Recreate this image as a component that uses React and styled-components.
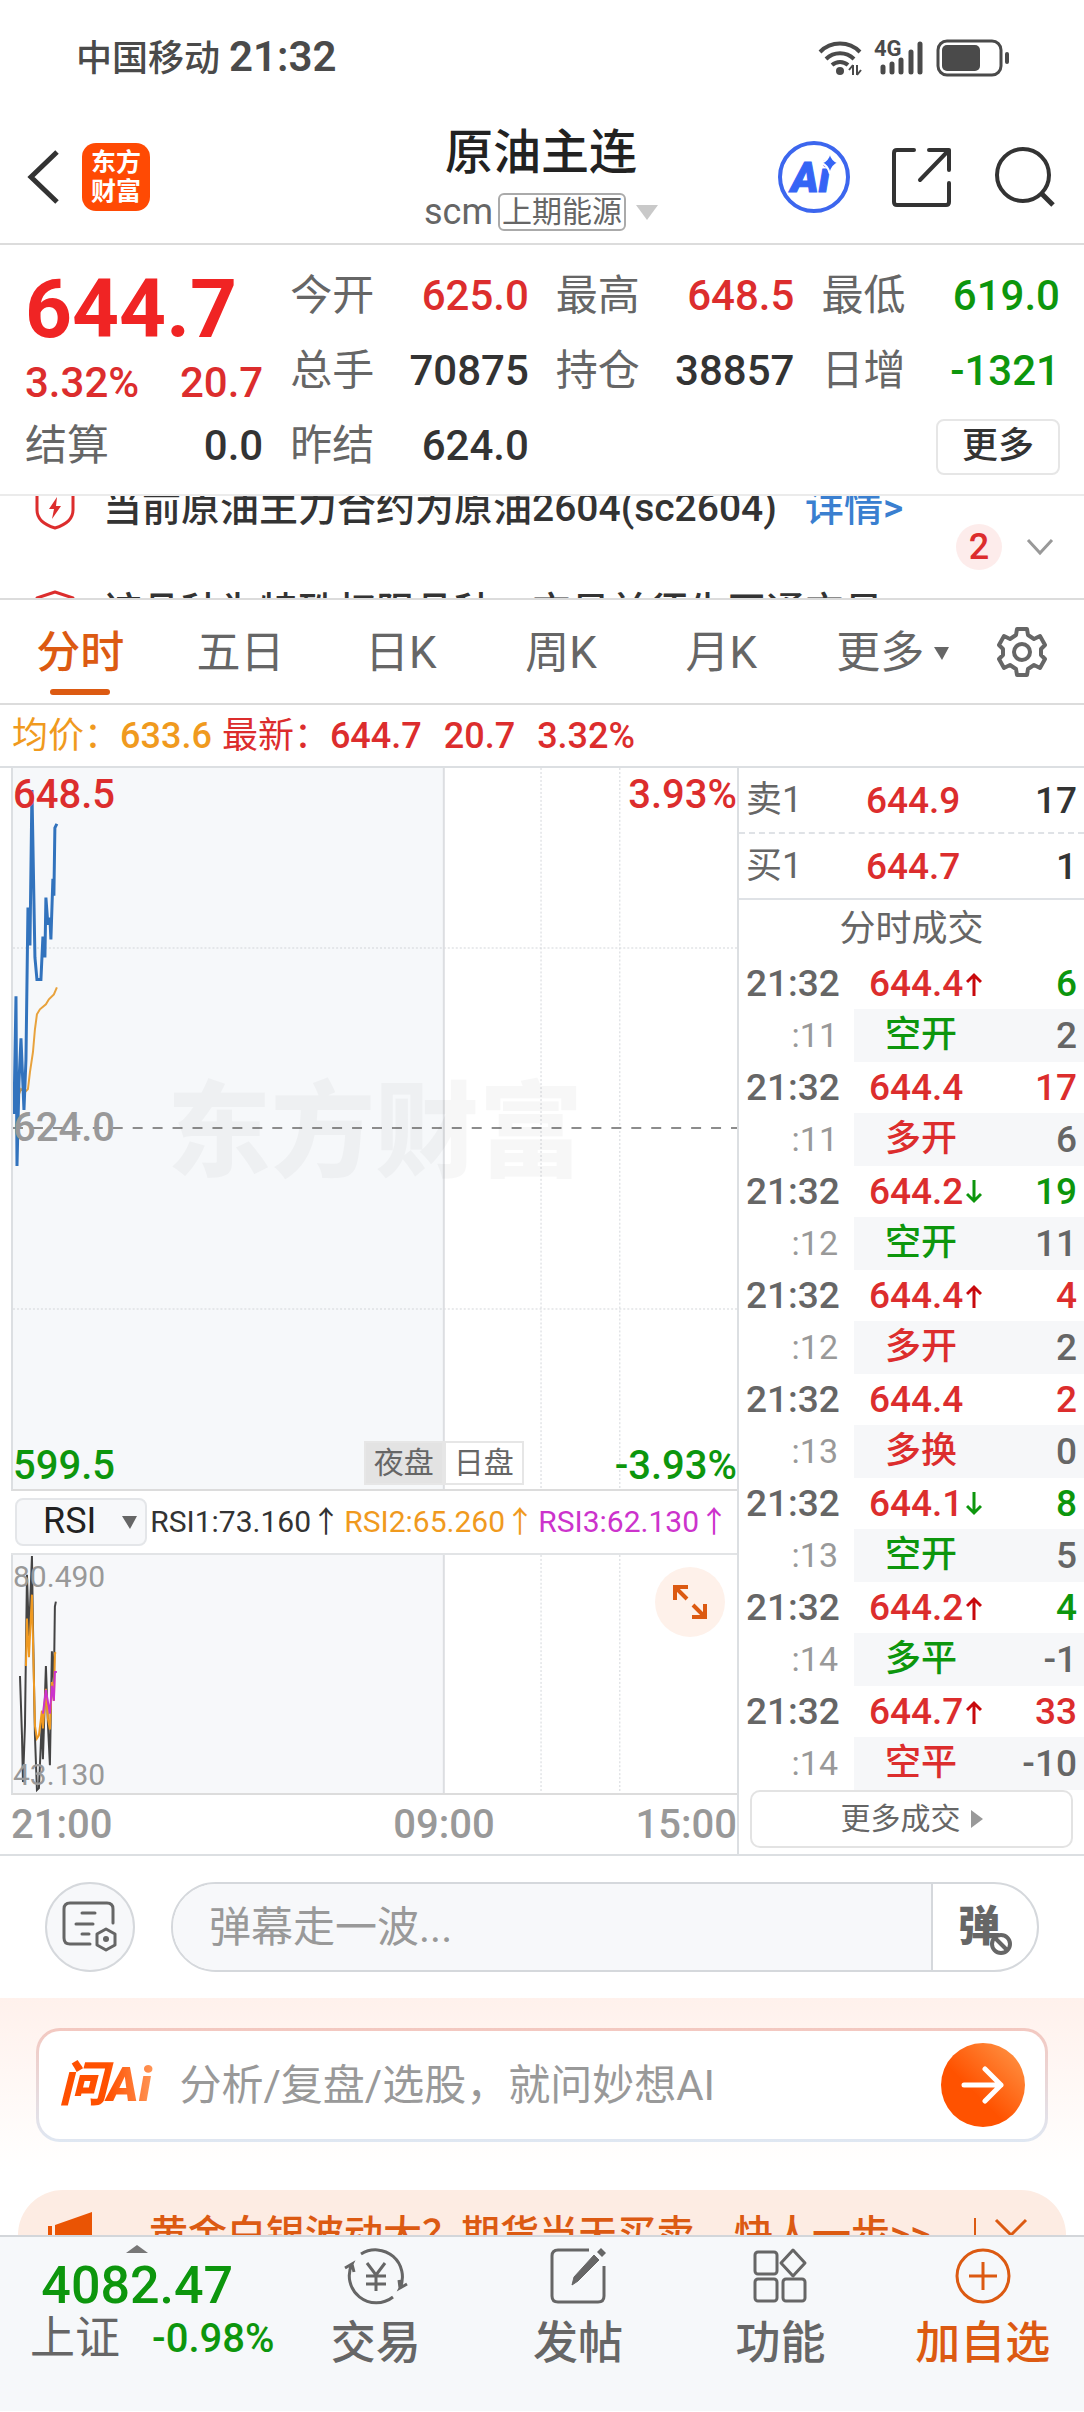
import React, { useState } from 'react';
import styled, { createGlobalStyle } from 'styled-components';

const RED = '#dc2d2d';
const GREEN = '#0d960d';
const ORANGE = '#dc5a12';
const YELLOW = '#f09a1e';

const quotes = [
  { label: '今开', value: '625.0', color: RED },
  { label: '最高', value: '648.5', color: RED },
  { label: '最低', value: '619.0', color: GREEN },
  { label: '总手', value: '70875' },
  { label: '持仓', value: '38857' },
  { label: '日增', value: '-1321', color: GREEN },
];

const tabs = ['分时', '五日', '日K', '周K', '月K'];

const trades = [
  { price: '644.4', dir: 'up', vol: 6, color: GREEN, sec: ':11', type: '空开', typeColor: GREEN, diff: '2' },
  { price: '644.4', dir: '', vol: 17, color: RED, sec: ':11', type: '多开', typeColor: RED, diff: '6' },
  { price: '644.2', dir: 'down', vol: 19, color: GREEN, sec: ':12', type: '空开', typeColor: GREEN, diff: '11' },
  { price: '644.4', dir: 'up', vol: 4, color: RED, sec: ':12', type: '多开', typeColor: RED, diff: '2' },
  { price: '644.4', dir: '', vol: 2, color: RED, sec: ':13', type: '多换', typeColor: RED, diff: '0' },
  { price: '644.1', dir: 'down', vol: 8, color: GREEN, sec: ':13', type: '空开', typeColor: GREEN, diff: '5' },
  { price: '644.2', dir: 'up', vol: 4, color: GREEN, sec: ':14', type: '多平', typeColor: GREEN, diff: '-1' },
  { price: '644.7', dir: 'up', vol: 33, color: RED, sec: ':14', type: '空平', typeColor: RED, diff: '-10' },
];

const Shield = () => (
  <svg width="40" height="44" viewBox="0 0 40 44" fill="none" stroke={RED} strokeWidth="3" strokeLinejoin="round">
    <path d="M20 2 L38 8 V24 C38 33 30 39 20 42 C10 39 2 33 2 24 V8 Z" />
    <path d="M22 11 L14 23 H19 L17 33 L26 20 H21 Z" fill={RED} stroke="none" />
  </svg>
);

const Arrow = ({ dir }) => (
  <svg width="16" height="24" viewBox="0 0 16 24" fill="none" stroke={dir === 'up' ? '#c8080c' : GREEN} strokeWidth="3">
    {dir === 'up' ? <path d="M8 24 V3 M1 10 L8 3 L15 10" /> : <path d="M8 0 V21 M1 14 L8 21 L15 14" />}
  </svg>
);

const App = () => {
  const [tab, setTab] = useState('分时');
  const [comment, setComment] = useState('');
  const [question, setQuestion] = useState('');

  return (
    <Page>
      <GlobalStyle />

      <StatusBar>
        <Carrier>中国移动 <b>21:32</b></Carrier>
        <StatusIcons>
          <svg width="44" height="36" viewBox="0 0 44 36" fill="none" stroke="#4a4a4a" strokeWidth="4">
            <path d="M2 12 A28 28 0 0 1 42 12" />
            <path d="M8 19 A20 20 0 0 1 36 19" />
            <path d="M14 25 A12 12 0 0 1 30 25" />
            <circle cx="22" cy="31" r="4" fill="#4a4a4a" stroke="none" />
            <path d="M35 25 V35 M35 25 L31 30 M39 35 V25 M39 35 L43 30" strokeWidth="2" />
          </svg>
          <Signal>
            <span>4G</span>
            <svg width="44" height="34" viewBox="0 0 44 34" stroke="#4a4a4a" strokeWidth="5" strokeLinecap="round">
              <path d="M3 26 V31 M12 23 V31 M21 19 V31 M31 11 V31 M40 3 V31" />
            </svg>
          </Signal>
          <svg width="74" height="38" viewBox="0 0 74 38" fill="none">
            <rect x="2" y="2" width="63" height="34" rx="9" stroke="#4a4a4a" strokeWidth="3" />
            <rect x="6" y="6" width="38" height="26" rx="5" fill="#4a4a4a" />
            <path d="M71 15 V23" stroke="#4a4a4a" strokeWidth="4" strokeLinecap="round" />
          </svg>
        </StatusIcons>
      </StatusBar>

      <Header>
        <HeaderSide>
          <IconBtn aria-label="返回">
            <svg width="34" height="56" viewBox="0 0 34 56" fill="none" stroke="#333" strokeWidth="5">
              <path d="M31 3 L5 28 L31 53" />
            </svg>
          </IconBtn>
          <Logo>东方<br />财富</Logo>
        </HeaderSide>
        <TitleBox>
          <Title>原油主连</Title>
          <SubTitle>
            scm<Exchange>上期能源</Exchange>
            <svg width="22" height="15" viewBox="0 0 22 15"><path d="M0 0 H22 L11 15 Z" fill="#c9c9c9" /></svg>
          </SubTitle>
        </TitleBox>
        <HeaderSide $end>
          <IconBtn aria-label="AI">
            <svg width="72" height="72" viewBox="0 0 72 72">
              <circle cx="36" cy="36" r="34" fill="none" stroke="#3c66ee" strokeWidth="4" />
              <text x="13" y="51" fill="#3564f5" stroke="#3564f5" fontFamily="Roboto, sans-serif" fontWeight="900" fontStyle="italic" fontSize="42">Ai</text>
              <path d="M52 11 Q54 20 61 22 Q54 24 52 33 Q50 24 43 22 Q50 20 52 11 Z" fill="#3564f5" stroke="#fff" strokeWidth="2" />
            </svg>
          </IconBtn>
          <IconBtn aria-label="分享">
            <svg width="60" height="60" viewBox="0 0 60 60" fill="none" stroke="#333" strokeWidth="4" strokeLinecap="round" strokeLinejoin="round">
              <path d="M22 3 H5 Q2 3 2 6 V55 Q2 58 5 58 H54 Q57 58 57 55 V36" />
              <path d="M37 3 H57 V23 M57 3 L28 33" />
            </svg>
          </IconBtn>
          <IconBtn aria-label="搜索">
            <svg width="62" height="62" viewBox="0 0 62 62" fill="none" stroke="#333" strokeWidth="4">
              <circle cx="29" cy="29" r="26" />
              <path d="M47 47 L59 59" strokeWidth="5" />
            </svg>
          </IconBtn>
        </HeaderSide>
      </Header>

      <Quote>
        <PriceCol>
          <BigPrice>644.7</BigPrice>
          <Change><span>3.32%</span><span>20.7</span></Change>
        </PriceCol>
        <QuoteGrid>
          {quotes.map((item) => (
            <QuoteItem key={item.label}>
              <dt>{item.label}</dt>
              <Value $color={item.color}>{item.value}</Value>
            </QuoteItem>
          ))}
        </QuoteGrid>
        <QuoteItem><span>结算</span><Value as="span">0.0</Value></QuoteItem>
        <LastRow>
          <QuoteItem><span>昨结</span><Value as="span">624.0</Value></QuoteItem>
          <MoreBtn>更多</MoreBtn>
        </LastRow>
      </Quote>

      <Notice>
        <NoticeList>
          <NoticeRow><Shield /><span>当前原油主力合约为原油2604(sc2604)</span><a href="#detail">详情&gt;</a></NoticeRow>
          <NoticeRow><Shield /><span>该品种为特殊权限品种，交易前须先开通交易</span></NoticeRow>
        </NoticeList>
        <NoticeSide>
          <Count>2</Count>
          <svg width="28" height="18" viewBox="0 0 28 18" fill="none" stroke="#999" strokeWidth="3"><path d="M2 2 L14 15 L26 2" /></svg>
        </NoticeSide>
      </Notice>

      <Tabs>
        {tabs.map((name) => (
          <Tab key={name} $on={tab === name} onClick={() => setTab(name)}>{name}</Tab>
        ))}
        <Tab $wide>更多<svg width="15" height="13" viewBox="0 0 15 13"><path d="M0 0 H15 L8 13 Z" fill="#666" /></svg></Tab>
        <GearBtn aria-label="设置">
          <svg width="52" height="52" viewBox="0 0 52 52" fill="none" stroke="#666" strokeWidth="4" strokeLinejoin="round">
            <path d="M21 3 H31 L32 9 L38 13 L44 10 L49 19 L45 23 V29 L49 33 L44 42 L38 39 L32 43 L31 49 H21 L20 43 L14 39 L8 42 L3 33 L7 29 V23 L3 19 L8 10 L14 13 L20 9 Z" />
            <circle cx="26" cy="26" r="8" />
          </svg>
        </GearBtn>
      </Tabs>

      <AvgLine>
        <Avg $color={YELLOW}>均价：<em>633.6</em></Avg>
        <Avg $color={RED}>最新：<em>644.7</em><em>20.7</em><em>3.32%</em></Avg>
      </AvgLine>

      <Main>
        <ChartCol>
          <Plot $height={723}>
            <Watermark>东方财富</Watermark>
            <svg viewBox="0 0 726 723" preserveAspectRatio="none" fill="none">
              <rect x="0" y="0" width="432" height="723" fill="#eef2f6" fillOpacity="0.5" />
              <g stroke="#d3d6da" strokeDasharray="2 2">
                <path d="M0 180.5 H726 M0 542.5 H726 M529.5 0 V723 M608.5 0 V723" />
              </g>
              <path d="M432 0 V723" stroke="#dcdee1" strokeWidth="2" />
              <path d="M0 361 H726" stroke="#8c8c8c" strokeWidth="2" strokeDasharray="10 10" />
              <path d="M4 332 L8 322 L12 325 L15 322 L17 305 L20 285 L22 262 L24 247 L27 242 L33 237 L36 232 L41 227 L44 220" stroke="#e8a23c" strokeWidth="2" />
              <path d="M1 347 L3 229 L4 399 L6 315 L8 271 L11 343 L13 292 L15 140 L17 178 L19 22 L22 190 L24 212 L28 212 L30 169 L32 190 L33 130 L35 157 L37 150 L38 172 L40 111 L41 128 L42 60 L44 56" stroke="#3273bd" strokeWidth="3" />
            </svg>
            <Mark $color={RED} $top>648.5</Mark>
            <Mark $color={RED} $top $right>3.93%</Mark>
            <Mark $color="#999" $mid>624.0</Mark>
            <Mark $color={GREEN}>599.5</Mark>
            <Mark $color={GREEN} $right>-3.93%</Mark>
            <Sessions><span>夜盘</span><span>日盘</span></Sessions>
          </Plot>

          <RsiRow>
            <SelectBox>
              <select aria-label="指标" defaultValue="RSI"><option>RSI</option></select>
              <svg width="15" height="13" viewBox="0 0 15 13"><path d="M0 0 H15 L8 13 Z" fill="#666" /></svg>
            </SelectBox>
            <Rsi $color="#333">RSI1:73.160↑</Rsi>
            <Rsi $color={YELLOW}>RSI2:65.260↑</Rsi>
            <Rsi $color="#cc33cc">RSI3:62.130↑</Rsi>
          </RsiRow>

          <Plot $height={240}>
            <svg viewBox="0 0 726 240" preserveAspectRatio="none" fill="none">
              <rect x="0" y="0" width="432" height="240" fill="#f7f8fa" />
              <path d="M529.5 0 V240 M608.5 0 V240" stroke="#d3d6da" strokeDasharray="2 2" />
              <path d="M432 0 V240" stroke="#dcdee1" strokeWidth="2" />
              <path d="M7 122 L9 182 L10 229 L12 172 L14 20 L16 82 L19 1 L20 70 L22 182 L24 237 L26 235 L29 165 L30 206 L33 112 L35 170 L37 212 L39 97 L41 130 L42 52 L43 47" stroke="#444" strokeWidth="2" />
              <path d="M13 112 L14 64 L16 103 L19 40 L22 172 L24 185 L26 182 L29 157 L30 175 L33 135 L35 165 L37 176 L39 128 L41 147 L42 99 L43 98" stroke="#ef9a22" strokeWidth="2" />
              <path d="M30 160 L33 136 L37 160 L39 132 L41 147 L42 118 L44 118" stroke="#cc33cc" strokeWidth="2" />
            </svg>
            <Mark $small $color="#999" $top>80.490</Mark>
            <Mark $small $color="#999">43.130</Mark>
            <ExpandBtn aria-label="全屏">
              <svg width="34" height="34" viewBox="0 0 34 34" fill="none" stroke="#dc5a12" strokeWidth="4">
                <path d="M15 2 H2 V15 M2 2 L14 14 M19 32 H32 V19 M32 32 L20 20" />
              </svg>
            </ExpandBtn>
          </Plot>
          <Axis><span>21:00</span><span>09:00</span><span>15:00</span></Axis>
        </ChartCol>

        <BookCol>
          <BookRow $dashed><span>卖1</span><b>644.9</b><i>17</i></BookRow>
          <BookRow><span>买1</span><b>644.7</b><i>1</i></BookRow>
          <TradeTitle>分时成交</TradeTitle>
          <TradeTable>
            <tbody>
              {trades.map((item, index) => (
                <React.Fragment key={index}>
                  <TradeRow>
                    <td>21:32</td>
                    <PriceCell>{item.price}{item.dir && <Arrow dir={item.dir} />}</PriceCell>
                    <NumCell $color={item.color}>{item.vol}</NumCell>
                  </TradeRow>
                  <DetailRow>
                    <td>{item.sec}</td>
                    <TypeCell $color={item.typeColor}>{item.type}</TypeCell>
                    <NumCell>{item.diff}</NumCell>
                  </DetailRow>
                </React.Fragment>
              ))}
            </tbody>
          </TradeTable>
          <MoreTrades>
            更多成交
            <svg width="12" height="18" viewBox="0 0 12 18"><path d="M0 0 L12 9 L0 18 Z" fill="#999" /></svg>
          </MoreTrades>
        </BookCol>
      </Main>

      <Danmu>
        <RoundBtn aria-label="弹幕设置">
          <svg width="56" height="52" viewBox="0 0 56 52" fill="none" stroke="#666" strokeWidth="3" strokeLinecap="round">
            <path d="M28 43 H8 Q2 43 2 37 V8 Q2 2 8 2 H45 Q51 2 51 8 V22" />
            <path d="M20 12 H33 M14 23 H31 M20 33 H27" />
            <path d="M44 28 L53 33 V44 L44 49 L35 44 V33 Z" strokeLinejoin="round" />
            <circle cx="44" cy="38" r="3" fill="#666" stroke="none" />
          </svg>
        </RoundBtn>
        <DanmuBox>
          <input
            type="text"
            aria-label="弹幕"
            placeholder="弹幕走一波..."
            value={comment}
            onChange={(e) => {setComment(e.target.value)}}
          />
          <DanmuBtn>
            弹
            <svg width="24" height="24" viewBox="0 0 24 24" fill="#fff" stroke="#666" strokeWidth="4">
              <circle cx="12" cy="12" r="9" /><path d="M6 6 L18 18" />
            </svg>
          </DanmuBtn>
        </DanmuBox>
      </Danmu>

      <AiArea>
        <AiBox>
          <AiLogo>问Ai</AiLogo>
          <input
            type="text"
            aria-label="问AI"
            placeholder="分析/复盘/选股，就问妙想AI"
            value={question}
            onChange={(e) => {setQuestion(e.target.value)}}
          />
          <SendBtn aria-label="发送">
            <svg width="44" height="38" viewBox="0 0 44 38" fill="none" stroke="#fff" strokeWidth="5" strokeLinecap="round" strokeLinejoin="round">
              <path d="M3 19 H40 M24 3 L40 19 L24 35" />
            </svg>
          </SendBtn>
        </AiBox>
      </AiArea>

      <BannerClip>
        <Banner>
          <svg width="50" height="46" viewBox="0 0 50 46" fill="#ea5404">
            <path d="M2 14 H6 V34 H2 Z M9 13 L46 0 V46 L9 33 Z" />
          </svg>
          <a href="#ad">黄金白银波动大？期货当天买卖，快人一步&gt;&gt;</a>
          <CloseBtn aria-label="关闭">
            <svg width="34" height="34" viewBox="0 0 34 34" fill="none" stroke={ORANGE} strokeWidth="3"><path d="M2 2 L32 32 M32 2 L2 32" /></svg>
          </CloseBtn>
        </Banner>
      </BannerClip>

      <BottomBar>
        <IndexBox>
          <svg width="22" height="8" viewBox="0 0 22 8"><path d="M0 8 L11 0 L22 8 Z" fill="#777" /></svg>
          <strong>4082.47</strong>
          <div><span>上证</span><em>-0.98%</em></div>
        </IndexBox>
        <NavBtn>
          <svg width="66" height="58" viewBox="0 0 66 58" fill="none" stroke="#666" strokeWidth="3">
            <path d="M18 7 A27 27 0 0 1 57 41 L64 37 M57 41 L56 33" />
            <path d="M50 50 A27 27 0 0 1 9 17 L2 21 M9 17 L11 25" />
            <path d="M24 16 L33 28 L42 16 M33 28 V44 M23 29 H43 M23 37 H43" />
          </svg>
          交易
        </NavBtn>
        <NavBtn>
          <svg width="58" height="58" viewBox="0 0 58 58" fill="none" stroke="#666" strokeWidth="3">
            <path d="M40 3 H9 Q3 3 3 9 V49 Q3 55 9 55 H49 Q55 55 55 49 V19" />
            <path d="M23 38 L25 30 L45 8 L50 13 L29 34 Z" fill="#666" strokeWidth="1" />
            <path d="M48 5 L52 1 L57 6 L53 10 Z" fill="#666" stroke="none" />
          </svg>
          发帖
        </NavBtn>
        <NavBtn>
          <svg width="58" height="58" viewBox="0 0 58 58" fill="none" stroke="#666" strokeWidth="3">
            <rect x="4" y="5" width="22" height="22" rx="3" />
            <path d="M42 3 L54 16 L42 29 L30 16 Z" strokeLinejoin="round" />
            <rect x="4" y="32" width="22" height="22" rx="3" />
            <rect x="32" y="32" width="22" height="22" rx="3" />
          </svg>
          功能
        </NavBtn>
        <NavBtn $color={ORANGE}>
          <svg width="58" height="58" viewBox="0 0 58 58" fill="none" stroke={ORANGE} strokeWidth="3">
            <circle cx="29" cy="29" r="26" /><path d="M29 15 V43 M15 29 H43" />
          </svg>
          加自选
        </NavBtn>
      </BottomBar>
    </Page>
  );
};

export default App;

const GlobalStyle = createGlobalStyle`
  * { box-sizing: border-box; }
  body { margin: 0; background: #fff; }
  body, button, input, select { font-family: Roboto, "Noto Sans CJK SC", sans-serif; line-height: 1.2; }
  button { padding: 0; border: none; background: none; color: inherit; cursor: pointer; }
  a { text-decoration: none; }
  em, i { font-style: normal; }
  svg { display: block; flex-shrink: 0; }
`;

const Page = styled.div`
  width: 100%;
  color: #333; font-weight: 500;
`;

const StatusBar = styled.div`
  height: 114px;
  padding: 2px 74px 0 76px;
  display: flex; justify-content: space-between; align-items: center;
  color: #4a4a4a;
`;

const Carrier = styled.div`
  font-size: 36px; line-height: 50px;

  & b { font-size: 42px; font-weight: 600; }
`;

const StatusIcons = styled.div`
  display: flex; align-items: center; gap: 12px;
`;

const Signal = styled.div`
  position: relative;
  padding-left: 6px;

  & span {
    position: absolute; top: -4px; left: 0;
    font-size: 22px; line-height: 24px; font-weight: 700;
  }
`;

const Header = styled.header`
  height: 131px;
  padding: 0 28px 3px 26px;
  display: grid; grid-template-columns: 1fr auto 1fr; align-items: center;
  border-bottom: 2px solid #dcdcdc;
`;

const HeaderSide = styled.div`
  display: flex; align-items: center;
  justify-content: ${props => props.$end ? 'flex-end' : 'flex-start'};
  gap: ${props => props.$end ? '42px' : '22px'};
`;

const IconBtn = styled.button`
  display: flex;
`;

const Logo = styled.div`
  width: 68px; height: 68px;
  padding: 5px 0;
  border-radius: 14px;
  background: #ff4a04;
  color: #fff; font-size: 25px; line-height: 29px; font-weight: 700; text-align: center;
`;

const TitleBox = styled.div`
  text-align: center;
`;

const Title = styled.h1`
  margin: 0;
  font-size: 48px; line-height: 70px; font-weight: 500; color: #222;
`;

const SubTitle = styled.div`
  display: flex; align-items: center; gap: 5px;
  font-size: 36px; line-height: 48px; color: #666; font-weight: 400;

  & svg { margin-left: 5px; }
`;

const Exchange = styled.span`
  padding: 0 2px;
  border: 2px solid #aaa; border-radius: 6px;
  font-size: 30px; line-height: 34px;
`;

const Quote = styled.section`
  padding: 14px 24px 10px 25px;
  display: grid; grid-template-columns: 238fr 769fr; column-gap: 27px;
  border-bottom: 2px solid #ebebeb;
`;

const PriceCol = styled.div`
  color: ${RED};
`;

const BigPrice = styled.div`
  font-size: 82px; line-height: 100px; font-weight: 700; color: #f02424;
`;

const Change = styled.div`
  display: flex; justify-content: space-between;
  font-size: 42px; line-height: 48px;
`;

const QuoteGrid = styled.dl`
  margin: 0;
  display: grid; grid-template-columns: repeat(3, 1fr); column-gap: 27px;
`;

const QuoteItem = styled.div`
  height: 75px;
  display: flex; justify-content: space-between; align-items: center;
  font-size: 42px; color: #666; font-weight: 400;
`;

const Value = styled.dd`
  margin: 0;
  color: ${props => props.$color || '#333'}; font-weight: 500;
`;

const LastRow = styled.div`
  display: grid; grid-template-columns: repeat(3, 1fr); column-gap: 27px;
  align-items: center;
`;

const MoreBtn = styled.button`
  grid-column: 3; justify-self: end;
  width: 124px; height: 56px;
  border: 2px solid #e6e6e6; border-radius: 8px;
  font-size: 36px; font-weight: 500;
`;

const Notice = styled.section`
  height: 104px;
  padding: 0 30px 0 35px;
  display: flex; justify-content: space-between; align-items: center;
  border-bottom: 2px solid #dcdcdc;
  overflow: hidden;
`;

/* ticker caught between two messages */
const NoticeList = styled.div`
  align-self: flex-start;
  margin-top: -40px;
`;

const NoticeRow = styled.div`
  height: 104px;
  display: flex; align-items: center; gap: 28px;
  font-size: 39px; white-space: nowrap;

  & a { color: #3a7fd0; }
`;

const NoticeSide = styled.div`
  display: flex; align-items: center; gap: 24px;
`;

const Count = styled.span`
  width: 46px; height: 46px;
  border-radius: 50%;
  background: #fdeceb;
  color: ${RED}; font-size: 36px; line-height: 46px; text-align: center;
`;

const Tabs = styled.nav`
  height: 105px;
  padding-right: 24px;
  display: flex;
  border-bottom: 2px solid #dcdcdc;
`;

const Tab = styled.button`
  position: relative;
  flex: ${props => props.$wide ? 182 : 160} 1 0;
  padding-top: 3px;
  display: flex; justify-content: center; align-items: center; gap: 10px;
  font-size: 44px; color: ${props => props.$on ? ORANGE : '#666'};
  font-weight: ${props => props.$on ? 500 : 400};

  &::after {
    content: '';
    display: ${props => props.$on ? 'block' : 'none'};
    position: absolute; bottom: 8px; left: calc(50% - 30px);
    width: 60px; height: 6px;
    border-radius: 3px;
    background: ${ORANGE};
  }
`;

const GearBtn = styled.button`
  flex: 76 1 0;
  display: flex; justify-content: center; align-items: center;
`;

const AvgLine = styled.div`
  height: 63px;
  padding: 2px 0 0 12px;
  display: flex; align-items: center; gap: 10px;
  border-bottom: 2px solid #dcdfe2;
`;

const Avg = styled.div`
  display: flex; align-items: center;
  font-size: 36px; color: ${props => props.$color}; font-weight: 400;

  & em { font-weight: 500; }
  & em + em { margin-left: 22px; }
`;

const Main = styled.main`
  display: grid; grid-template-columns: 739fr 345fr;
  border-bottom: 2px solid #dcdfe2;
`;

const ChartCol = styled.div`
  min-width: 0;
  padding-left: 11px;
  border-right: 2px solid #dcdfe2;
`;

const Plot = styled.div`
  position: relative;
  height: ${props => props.$height + 'px'};
  border-left: 2px solid #dcdfe2; border-bottom: 2px solid #dcdcdc;

  & > svg { width: 100%; height: 100%; }
`;

const Watermark = styled.div`
  position: absolute; inset: 0;
  padding-top: 12px;
  display: flex; justify-content: center; align-items: center;
  font-size: 104px; font-weight: 900; color: rgba(0, 0, 0, 0.03);
`;

const Mark = styled.span`
  position: absolute;
  ${props => props.$mid ? 'top: calc(50% - 24px);' : props.$top ? 'top: 4px;' : 'bottom: 0;'}
  ${props => props.$right ? 'right: 0;' : 'left: 0;'}
  font-size: ${props => props.$small ? '30px' : '40px'};
  line-height: ${props => props.$small ? '36px' : '46px'};
  color: ${props => props.$color};
  font-weight: ${props => props.$small ? 400 : 500};
`;

const Sessions = styled.div`
  position: absolute; bottom: 4px; left: calc(432 / 726 * 100% - 80px);
  display: flex;
  font-size: 30px; line-height: 40px; color: #666; font-weight: 400;

  & span {
    width: 80px;
    border: 2px solid #e6e6e6;
    background: #fff;
    text-align: center;
  }
  & span:first-child { background: #e3e3e3; }
`;

const RsiRow = styled.div`
  height: 64px;
  padding: 0 8px 0 4px;
  display: flex; align-items: center; justify-content: space-between;
  border-bottom: 2px solid #e2e4e6;
`;

const SelectBox = styled.div`
  position: relative;

  & select {
    width: 132px; height: 48px;
    padding-left: 26px;
    appearance: none;
    border: 2px solid #e4e6e9; border-radius: 8px;
    background: #f7f8fa;
    font-size: 36px; color: #222;
  }
  & svg { position: absolute; top: 18px; right: 10px; pointer-events: none; }
`;

const Rsi = styled.span`
  font-size: 30px; color: ${props => props.$color}; font-weight: 400; white-space: nowrap;
`;

const ExpandBtn = styled.button`
  position: absolute; top: 12px; right: 12px;
  width: 70px; height: 70px;
  display: flex; justify-content: center; align-items: center;
  border-radius: 50%;
  background: #fef1ea;
`;

const Axis = styled.div`
  height: 58px;
  padding-top: 2px;
  display: grid; grid-template-columns: 382fr 102px 242fr; align-items: center;
  font-size: 40px; color: #999;

  & span { text-align: center; }
  & span:first-child { text-align: left; }
  & span:last-child { text-align: right; }
`;

const BookCol = styled.div`
  min-width: 0;
  display: flex; flex-direction: column;
`;

const BookRow = styled.div`
  height: 66px;
  padding: 2px 7px 0;
  display: grid; grid-template-columns: 120px 1fr auto; align-items: center;
  border-bottom: 2px ${props => props.$dashed ? 'dashed' : 'solid'} #dfe2e6;
  font-size: 37px;

  & span { font-size: 36px; color: #666; font-weight: 400; }
  & b { color: ${RED}; font-weight: 500; }
`;

const TradeTitle = styled.h2`
  margin: 0;
  font-size: 36px; line-height: 58px; font-weight: 400; color: #666; text-align: center;
`;

const TradeTable = styled.table`
  width: 100%;
  border-collapse: collapse; table-layout: fixed;

  & td { padding: 0; }
  & td:first-child { width: 115px; padding: 0 16px 0 7px; }
`;

const TradeRow = styled.tr`
  height: 51px;
  font-size: 37px; line-height: 51px; color: #666;
`;

const DetailRow = styled.tr`
  height: 53px;
  font-size: 37px; line-height: 53px; color: #666;

  & td:first-child { font-size: 34px; color: #999; font-weight: 400; text-align: right; }
  & td + td { background: #f6f7f9; }
`;

const PriceCell = styled.td`
  && { width: 150px; padding-left: 15px; }
  color: ${RED}; white-space: nowrap;

  & svg { display: inline-block; margin-left: 3px; }
`;

const TypeCell = styled.td`
  && { padding-left: 31px; }
  font-size: 36px; color: ${props => props.$color};
`;

const NumCell = styled.td`
  && { padding-right: 7px; }
  color: ${props => props.$color || '#666'}; text-align: right;
`;

const MoreTrades = styled.button`
  height: 58px;
  margin: 0 11px 6px;
  display: flex; justify-content: center; align-items: center; gap: 10px;
  border: 2px solid #e3e3e3; border-radius: 10px;
  font-size: 30px; color: #666;
`;

const Danmu = styled.section`
  padding: 26px 45px;
  display: flex; gap: 36px;
`;

const RoundBtn = styled.button`
  width: 90px; height: 90px;
  display: flex; justify-content: center; align-items: center;
  flex-shrink: 0;
  border: 2px solid #d5d8dc; border-radius: 50%;
  background: #f7f8fa;
`;

const DanmuBox = styled.div`
  flex: 1;
  height: 90px;
  display: flex;
  border: 2px solid #d5d8dc; border-radius: 45px;
  overflow: hidden;

  & input {
    flex: 1; min-width: 0;
    padding: 3px 0 0 36px;
    border: none; outline: none;
    background: #f7f8fa;
    font-size: 42px; color: #333;
  }
  & input::placeholder { color: #999; }
`;

const DanmuBtn = styled.button`
  position: relative;
  width: 106px;
  padding-right: 12px;
  border-left: 2px solid #d5d8dc;
  font-size: 42px; color: #666; font-weight: 900;

  & svg { position: absolute; right: 24px; bottom: 14px; }
`;

const AiArea = styled.section`
  padding: 30px 36px 48px;
  background: linear-gradient(#fff1ec, #fff 90%);
`;

const AiBox = styled.div`
  height: 114px;
  padding: 0 20px;
  display: flex; align-items: center;
  border: 3px solid transparent; border-radius: 24px;
  background: linear-gradient(#fff, #fff) padding-box, linear-gradient(#f3c8c0, #dfe7f2) border-box;

  & input {
    flex: 1; min-width: 0;
    padding: 3px 0 0 24px;
    border: none; outline: none; background: none;
    font-size: 42px; color: #333;
  }
  & input::placeholder { color: #999; }
`;

const AiLogo = styled.span`
  padding-right: 4px;
  background: linear-gradient(90deg, #ff5000 50%, #ff9a5c);
  background-clip: text;
  color: transparent; font-size: 48px; font-weight: 900; font-style: italic;
`;

const SendBtn = styled.button`
  width: 84px; height: 84px;
  display: flex; justify-content: center; align-items: center;
  border-radius: 50%;
  background: linear-gradient(45deg, #ff5200 40%, #ff9a4c);
`;

const BannerClip = styled.div`
  height: 45px;
  padding: 0 18px;
  overflow: hidden;
`;

const Banner = styled.div`
  height: 90px;
  padding: 0 38px 0 28px;
  display: flex; align-items: center;
  border-radius: 45px;
  background: #fdece3;

  & a {
    margin-left: 53px; flex: 1;
    font-size: 39px; color: ${ORANGE}; white-space: nowrap;
  }
`;

const CloseBtn = styled.button`
  padding-left: 18px;
  border-left: 2px solid ${ORANGE};
`;

const BottomBar = styled.footer`
  height: 176px;
  display: flex;
  border-top: 2px solid #d3d6da;
  background: #f6f8fa;
`;

const IndexBox = styled.div`
  flex: 274 1 0;
  padding-top: 8px;
  display: flex; flex-direction: column; align-items: center;
  color: ${GREEN};

  & strong { font-size: 52px; line-height: 66px; font-weight: 500; }
  & div { display: flex; align-items: center; gap: 32px; padding-left: 30px; line-height: 40px; white-space: nowrap; }
  & span { font-size: 45px; color: #666; font-weight: 400; }
  & em { font-size: 40px; }
`;

const NavBtn = styled.button`
  flex: 202 1 0;
  padding-top: 10px;
  display: flex; flex-direction: column; align-items: center; gap: 10px;
  font-size: 45px; line-height: 58px; color: ${props => props.$color || '#666'}; font-weight: 500;
`;
